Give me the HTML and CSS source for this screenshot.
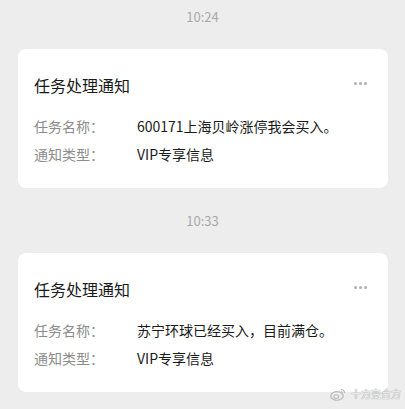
FILE: index.html
```html
<!DOCTYPE html>
<html lang="zh-CN">
<head>
    <meta charset="UTF-8">
    <meta name="viewport" content="width=device-width, initial-scale=1.0">
    <title>任务处理通知</title>
    <link rel="stylesheet" href="styles.css">
</head>
<body>

<div class="chat">
    <div class="time first">10:24</div>
    <div class="card">
        <div class="card-head">
            <span class="title">任务处理通知</span>
            <span class="more"><i></i><i></i><i></i></span>
        </div>
        <div class="row">
            <span class="label">任务名称：</span>
            <span class="value">600171上海贝岭涨停我会买入。</span>
        </div>
        <div class="row">
            <span class="label">通知类型：</span>
            <span class="value">VIP专享信息</span>
        </div>
    </div>

    <div class="time">10:33</div>
    <div class="card">
        <div class="card-head">
            <span class="title">任务处理通知</span>
            <span class="more"><i></i><i></i><i></i></span>
        </div>
        <div class="row">
            <span class="label">任务名称：</span>
            <span class="value">苏宁环球已经买入，目前满仓。</span>
        </div>
        <div class="row">
            <span class="label">通知类型：</span>
            <span class="value">VIP专享信息</span>
        </div>
    </div>
</div>

<div class="watermark">
    <svg width="16" height="13" viewBox="0 0 16 13">
        <ellipse cx="7" cy="8" rx="6.2" ry="4.3" fill="none" stroke="#bdbdbd" stroke-width="1.3"/>
        <ellipse cx="6.3" cy="8.6" rx="2.4" ry="1.9" fill="none" stroke="#bdbdbd" stroke-width="1.1"/>
        <path d="M11 1.5 A3.5 3.5 0 0 1 14.6 5" fill="none" stroke="#bdbdbd" stroke-width="1.2"/>
        <path d="M11 3.5 A1.6 1.6 0 0 1 12.6 5" fill="none" stroke="#bdbdbd" stroke-width="1"/>
    </svg>
    <span>十方变合方</span>
</div>

</body>
</html>
```

FILE: styles.css
```css
body {
    margin: 0;
    background: #ededed;
    font-family: "Microsoft YaHei", "Noto Sans CJK SC", "Noto Sans", sans-serif;
    position: relative;
    height: 409px;
    overflow: hidden;
}
.time {
    text-align: center;
    font-size: 13px;
    line-height: 18px;
    color: #a9a9a9;
    margin-top: 24px;
}
.time.first {
    margin-top: 8px;
}
.card {
    margin: 23px 0 0 18px;
    width: 370px;
    box-sizing: border-box;
    background: #fff;
    border-radius: 8px;
    padding: 24px 21px 20px 16px;
}
.card-head {
    display: flex;
    justify-content: space-between;
    align-items: center;
    height: 24px;
    margin-bottom: 15px;
}
.title {
    font-size: 16px;
    color: #1a1a1a;
    line-height: 24px;
}
.more {
    display: flex;
    gap: 2px;
    margin-top: -3px;
}
.more i {
    width: 3px;
    height: 3px;
    border-radius: 50%;
    background: #b0b0b0;
}
.row {
    display: flex;
    font-size: 14px;
    line-height: 28px;
}
.label {
    width: 103px;
    color: #8c8c8c;
}
.value {
    color: #1a1a1a;
}
.watermark {
    position: absolute;
    left: 330px;
    top: 387px;
    display: flex;
    align-items: center;
    gap: 5px;
    white-space: nowrap;
    font-size: 10px;
    line-height: 14px;
    color: #f4f4f4;
    text-shadow: 0 0 1px #999, 0 0 1px #999;
}
```
